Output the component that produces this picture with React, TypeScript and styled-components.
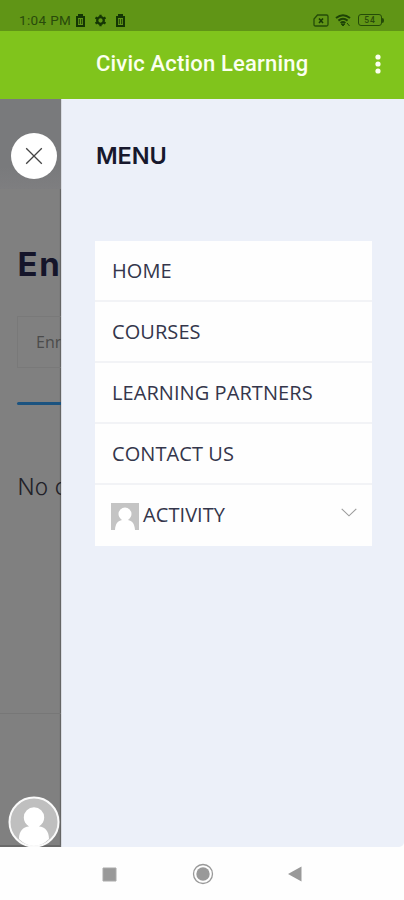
import React from "react";
import styled, { createGlobalStyle } from "styled-components";

const GlobalStyle = createGlobalStyle`
  * { box-sizing: border-box; }
  body { margin: 0; background: #fff; }
  h1, h2, p { margin: 0; font-weight: inherit; }
  button { border: 0; padding: 0; background: none; font: inherit; color: inherit; }
  svg { display: block; flex: none; }
`;

const Phone = styled.div`
  width: 404px;
  height: 900px;
  display: flex;
  flex-direction: column;
  overflow: hidden;
  background: #fefefe;
`;

const StatusBar = styled.header`
  height: 31px;
  flex: none;
  display: flex;
  align-items: center;
  justify-content: space-between;
  padding: 9px 20px 0 19px;
  background: #609516;
  color: #294a0b;
`;

const StatusGroup = styled.div<{ $gap: number }>`
  display: flex;
  align-items: center;
  gap: ${(p) => p.$gap}px;
`;

const Clock = styled.span`
  font: 400 13.5px/16px Roboto, sans-serif;
  letter-spacing: 0.35px;
  white-space: nowrap;
  margin-right: -4px;
`;

const AppBar = styled.div`
  height: 68px;
  flex: none;
  display: flex;
  align-items: center;
  justify-content: space-between;
  padding: 0 22px 3px 96px;
  background: #80c41c;
  color: #fbfff0;
`;

const Title = styled.h1`
  padding-top: 1px;
  font: 500 22px/28px Roboto, sans-serif;
  letter-spacing: 0.18px;
  white-space: nowrap;
`;

const Stage = styled.main`
  height: 748px;
  flex: none;
  display: flex;
`;

const Page = styled.section`
  width: 61px;
  flex: none;
  display: flex;
  flex-direction: column;
  overflow: hidden;
  white-space: nowrap;
  background: #808080;
  color: #15152a;
  box-shadow: inset -2px 0 1px -1px #626262;
`;

const PageHeader = styled.div`
  height: 90px;
  flex: none;
  padding: 34px 0 0 11px;
  background: linear-gradient(#797a7c 75%, #7e7e80);
`;

const CloseButton = styled.button`
  width: 46px;
  height: 46px;
  display: grid;
  place-items: center;
  border-radius: 50%;
  background: #fff;
`;

const PageTitle = styled.h2`
  margin: 54px 0 0 17.5px;
  font: 700 33px/42px Inter, sans-serif;
  letter-spacing: 1.6px;
`;

const Tab = styled.div`
  height: 52px;
  flex: none;
  width: 90px;
  margin: 31px 0 0 17px;
  padding-left: 18px;
  border: 1px solid #797979;
  font: 400 16px/50px "Open Sans", sans-serif;
  color: #4b4b4b;
`;

const Progress = styled.div`
  height: 3px;
  flex: none;
  margin: 34px 0 0 17px;
  border-radius: 2px 0 0 2px;
  background: #1b5380;
`;

const Notice = styled.p`
  margin: 65px 0 0 17.5px;
  font: 300 22.5px/34px Inter, sans-serif;
  letter-spacing: 0.2px;
  color: #222229;
`;

const PageFooter = styled.div`
  height: 134px;
  flex: none;
  margin-top: auto;
  border-top: 1px solid #777;
  border-bottom: 2px solid #6a6a6a;
  padding: 82px 0 0 8px;
`;

const Drawer = styled.aside`
  flex: 1;
  padding: 0 32px 0 33px;
  background: #ecf0f9;
  border-left: 1px solid #d8dbe2;
  border-bottom-right-radius: 5px;
`;

const DrawerTitle = styled.h2`
  height: 142px;
  padding: 41px 0 0 1px;
  font: 600 23.5px/32px Inter, sans-serif;
  letter-spacing: -0.1px;
  color: #17182d;
`;

const Menu = styled.nav`
  display: flex;
  flex-direction: column;
  gap: 2px;
  background: #f2f3f6;
`;

const MenuItem = styled.a`
  height: 59px;
  display: flex;
  align-items: center;
  gap: 4px;
  padding: 1px 15px 0 17px;
  background: #fefefe;
  font: 400 20px/28px "Open Sans", sans-serif;
  letter-spacing: 0.07px;
  color: #34364b;
  white-space: nowrap;

  &:last-child { height: 61px; padding: 0 15px 2px 16px; }
  > :last-child:not(:first-child) { margin: 0 0 5px auto; }
`;

const NavBar = styled.footer`
  flex: 1;
  display: flex;
  align-items: center;
  padding: 1px 0 0 102px;
  gap: 74.5px;
`;

const Trash = () => (
  <svg width="11" height="13" viewBox="0 0 11 13">
    <path d="M1 3H10M4 2V1H7V2M2 3V12H9V3" fill="none" stroke="#143504" strokeWidth="2" />
    <path d="M4.3 5V10M6.7 5V10" stroke="#1c4006" strokeWidth="1" />
  </svg>
);

const Gear = () => (
  <svg width="13" height="13" viewBox="0 0 13 13">
    <circle cx="6.5" cy="6.5" r="3.3" fill="none" stroke="#143504" strokeWidth="2.3" />
    <path d="M6.5.8V2.6M6.5 10.4V12.2M1.5 3.6L3.1 4.5M9.9 8.5L11.5 9.4M1.5 9.4L3.1 8.5M9.9 4.5L11.5 3.6" stroke="#143504" strokeWidth="2.3" />
  </svg>
);

const SimCard = () => (
  <svg width="16" height="13" viewBox="0 0 16 13">
    <path d="M4.5 1H13.5Q15 1 15 2.5V10.5Q15 12 13.5 12H2.5Q1 12 1 10.5V5Z" fill="none" stroke="#244b08" strokeWidth="1.3" />
    <path d="M6 4.5L10 9M10 4.5L6 9" stroke="#173b05" strokeWidth="1.6" />
  </svg>
);

const Wifi = () => (
  <svg width="17" height="13" viewBox="0 0 17 13">
    <path d="M1 4Q8 -1.5 15 4M3.4 6.6Q8 3 12.6 6.6M5.6 9Q8 7 10.4 9" fill="none" stroke="#1d4306" strokeWidth="2" />
    <path d="M6.3 10H9.7L8 12ZM12 9L14.5 12" fill="#1d4306" stroke="#1d4306" strokeWidth="1" />
  </svg>
);

const BatteryShell = styled.div`
  display: flex;
  align-items: center;

  &::after {
    content: "";
    width: 2px;
    height: 5px;
    border-radius: 0 2px 2px 0;
    background: #244b08;
  }
`;

const BatteryLevel = styled.span`
  width: 24px;
  height: 12px;
  border: 1.5px solid #244b08;
  border-radius: 3px;
  text-align: center;
  font: 500 8.5px/10px Roboto, sans-serif;
  letter-spacing: 1px;
`;

const Dots = () => (
  <svg width="8" height="20" viewBox="0 0 8 20" fill="currentColor">
    <circle cx="4" cy="3" r="2.6" />
    <circle cx="4" cy="10" r="2.6" />
    <circle cx="4" cy="17" r="2.6" />
  </svg>
);

const Cross = () => (
  <svg width="18" height="18" viewBox="0 0 18 18">
    <path d="M1.2 1.2L16.8 16.8M16.8 1.2L1.2 16.8" stroke="#444" strokeWidth="1.3" />
  </svg>
);

const ProfileBadge = () => (
  <svg width="52" height="52" viewBox="0 0 52 52">
    <circle cx="26" cy="26" r="24.5" fill="#bfbfbf" />
    <path d="M11 43C11 35 15 31 21 30.5C17.5 28 15.8 25 15.8 21.5A10.2 10.2 0 0 1 36.2 21.5C36.2 25 34.5 28 31 30.5C37 31 41 35 41 43Q34 50 26 50T11 43Z" fill="#fff" />
    <circle cx="26" cy="26" r="24.5" fill="none" stroke="#fafafa" strokeWidth="2" />
  </svg>
);

const SquareAvatar = styled.svg`
  margin-top: 4px;
`;

const Chevron = () => (
  <svg width="16" height="9" viewBox="0 0 16 9">
    <path d="M.7 .8L8 7.8L15.3 .8" fill="none" stroke="#9b9b9b" strokeWidth="1.1" />
  </svg>
);

export default function App() {
  return (
    <>
      <GlobalStyle />
      <Phone>
        <StatusBar>
          <StatusGroup $gap={8}>
            <Clock>1:04 PM</Clock>
            <Trash />
            <Gear />
            <Trash />
          </StatusGroup>
          <StatusGroup $gap={6}>
            <SimCard />
            <Wifi />
            <BatteryShell><BatteryLevel>54</BatteryLevel></BatteryShell>
          </StatusGroup>
        </StatusBar>
        <AppBar>
          <Title>Civic Action Learning</Title>
          <button aria-label="More options"><Dots /></button>
        </AppBar>
        <Stage>
          <Page>
            <PageHeader>
              <CloseButton aria-label="Close menu"><Cross /></CloseButton>
            </PageHeader>
            <PageTitle>En</PageTitle>
            <Tab>Enr</Tab>
            <Progress />
            <Notice>No c</Notice>
            <PageFooter><ProfileBadge /></PageFooter>
          </Page>
          <Drawer>
            <DrawerTitle>MENU</DrawerTitle>
            <Menu>
              <MenuItem>HOME</MenuItem>
              <MenuItem>COURSES</MenuItem>
              <MenuItem>LEARNING PARTNERS</MenuItem>
              <MenuItem>CONTACT US</MenuItem>
              <MenuItem>
                <SquareAvatar width="28" height="27" viewBox="0 0 28 27">
                  <path d="M0 0H28V27H0Z" fill="#c4c4c4" />
                  <path d="M4 27C4.5 20 7 18 11 17C8.5 15 7.5 13 7.5 11A6.5 6.5 0 0 1 20.5 11C20.5 13 19.5 15 17 17C21 18 23.5 20 24 27Z" fill="#fff" />
                </SquareAvatar>
                <span>ACTIVITY</span>
                <Chevron />
              </MenuItem>
            </Menu>
          </Drawer>
        </Stage>
        <NavBar>
          <svg width="15" height="15" viewBox="0 0 15 15"><path d="M1 1H14V14H1Z" fill="#999" stroke="#aaa" /></svg>
          <svg width="22" height="22" viewBox="0 0 22 22">
            <circle cx="11" cy="11" r="9.5" fill="none" stroke="#999" strokeWidth="1.3" />
            <circle cx="11" cy="11" r="6.7" fill="#999" />
          </svg>
          <svg width="14" height="16" viewBox="0 0 14 16"><path d="M0 8L13.5 .5V15.5Z" fill="#999" /></svg>
        </NavBar>
      </Phone>
    </>
  );
}
